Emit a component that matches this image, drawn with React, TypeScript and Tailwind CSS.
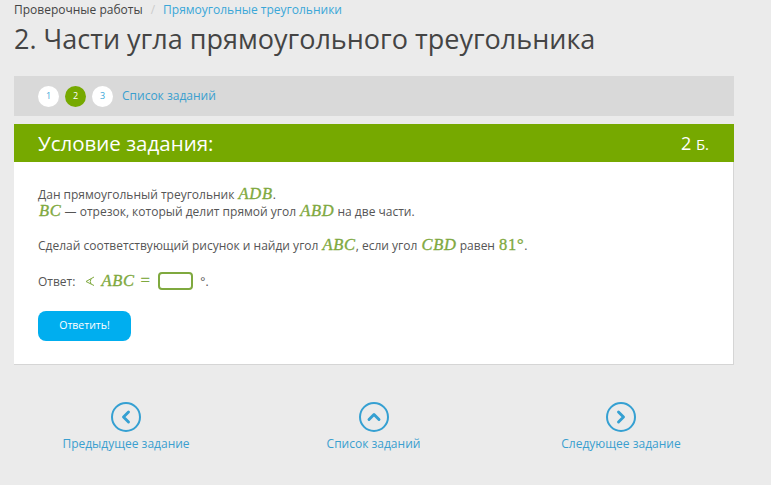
import { ChevronLeft, ChevronRight, ChevronUp } from 'lucide-react';
import type { ReactNode } from 'react';

const sans = { fontFamily: '"Open Sans", sans-serif' };

function M({ children }: { children: ReactNode }) {
  return (
    <span className="ml-[1px] font-['Liberation_Serif',serif] text-[16.5px] tracking-[0.7px] italic font-normal text-[#7fa93f] leading-none [-webkit-text-stroke:0.35px_#7fa93f]">
      {children}
    </span>
  );
}

function Step({ n, active }: { n: number; active?: boolean }) {
  return (
    <span
      className={
        active
          ? 'flex h-[21px] w-[21px] items-center justify-center rounded-full bg-[#76a900] text-[9px] text-white'
          : 'flex h-[21px] w-[21px] items-center justify-center rounded-full bg-white text-[9px] text-[#3aa7d8]'
      }
    >
      {n}
    </span>
  );
}

function NavLink({ label, icon }: { label: string; icon: ReactNode }) {
  return (
    <div className="flex w-[160px] flex-col items-center text-[12px] text-[#3a9fcf]">
      <span className="flex h-[30px] w-[30px] items-center justify-center rounded-full border-2 border-[#35a0d2]">
        {icon}
      </span>
      <span className="mt-[3px] leading-[18px]">{label}</span>
    </div>
  );
}

export default function App() {
  return (
    <main className="h-[485px] w-[771px] overflow-hidden bg-[#ebebeb] pl-[14px] text-[#444]" style={sans}>
      <div className="w-[720px]">
        {/* breadcrumb */}
        <div className="flex items-center pt-[1px] text-[12px] leading-[18px]">
          <span>Проверочные работы</span>
          <span className="mx-[8px] text-[#ccc]">/</span>
          <span className="text-[#3aa7d8]">Прямоугольные треугольники</span>
        </div>
        <h1 className="mt-[1px] text-[27px] leading-[37px] text-[#444]">2. Части угла прямоугольного треугольника</h1>

        {/* steps */}
        <div className="mt-[19px] flex h-[40px] items-center gap-[6px] bg-[#d9d9d9] pl-[24px]">
          <Step n={1} />
          <Step n={2} active />
          <Step n={3} />
          <span className="ml-[3px] text-[12px] text-[#3a9fcf]">Список заданий</span>
        </div>

        {/* task */}
        <div className="mt-[8px] flex h-[38px] items-center justify-between bg-[#76a900] pl-[24px] pr-[25px] text-white">
          <span className="text-[20.5px]">Условие задания:</span>
          <span className="text-[18px]">
            2 <span className="text-[15px]">Б.</span>
          </span>
        </div>
        <div className="h-[203px] border-r border-b border-[#d5d5d5] bg-white pl-[24px] pt-[24px] text-[12px] text-[#555]">
          <div className="h-[17px] leading-[17px]">
            Дан прямоугольный треугольник <M>ADB</M>.
          </div>
          <div className="h-[17px] leading-[17px]">
            <M>BC</M> — отрезок, который делит прямой угол <M>ABD</M> на две части.
          </div>
          <div className="mt-[17px] h-[17px] leading-[17px]">
            Сделай соответствующий рисунок и найди угол <M>ABC</M>, если угол <M>CBD</M> равен{' '}
            <M>
              <span className="not-italic">81°</span>
            </M>
            .
          </div>
          <div className="mt-[18px] flex h-[18px] items-center leading-[17px]">
            <span>Ответ:</span>
            <svg className="ml-[10px]" width="10" height="10" viewBox="0 0 10 10" fill="none" stroke="#7fa93f" strokeWidth="1">
              <path d="M9 1 L1 5.5 L9 9.5 M6 3 Q4.5 5.5 6 8" />
            </svg>
            <span className="ml-[5px]">
              <M>ABC =</M>
            </span>
            <span className="ml-[7px] h-[18px] w-[35px] rounded-[4px] border-2 border-[#7fa93f] bg-white"></span>
            <span className="ml-[7px]">°.</span>
          </div>
          <button className="mt-[21px] h-[30px] w-[93px] rounded-[8px] bg-[#00aeef] text-[10.5px] text-white">
            Ответить!
          </button>
        </div>

        {/* bottom nav */}
        <div className="mt-[37px] ml-[32px] flex w-[655px] justify-between">
          <NavLink label="Предыдущее задание" icon={<ChevronLeft size={20} strokeWidth={3.5} color="#35a0d2" />} />
          <NavLink label="Список заданий" icon={<ChevronUp size={20} strokeWidth={3.5} color="#35a0d2" />} />
          <NavLink label="Следующее задание" icon={<ChevronRight size={20} strokeWidth={3.5} color="#35a0d2" />} />
        </div>
      </div>
    </main>
  );
}
